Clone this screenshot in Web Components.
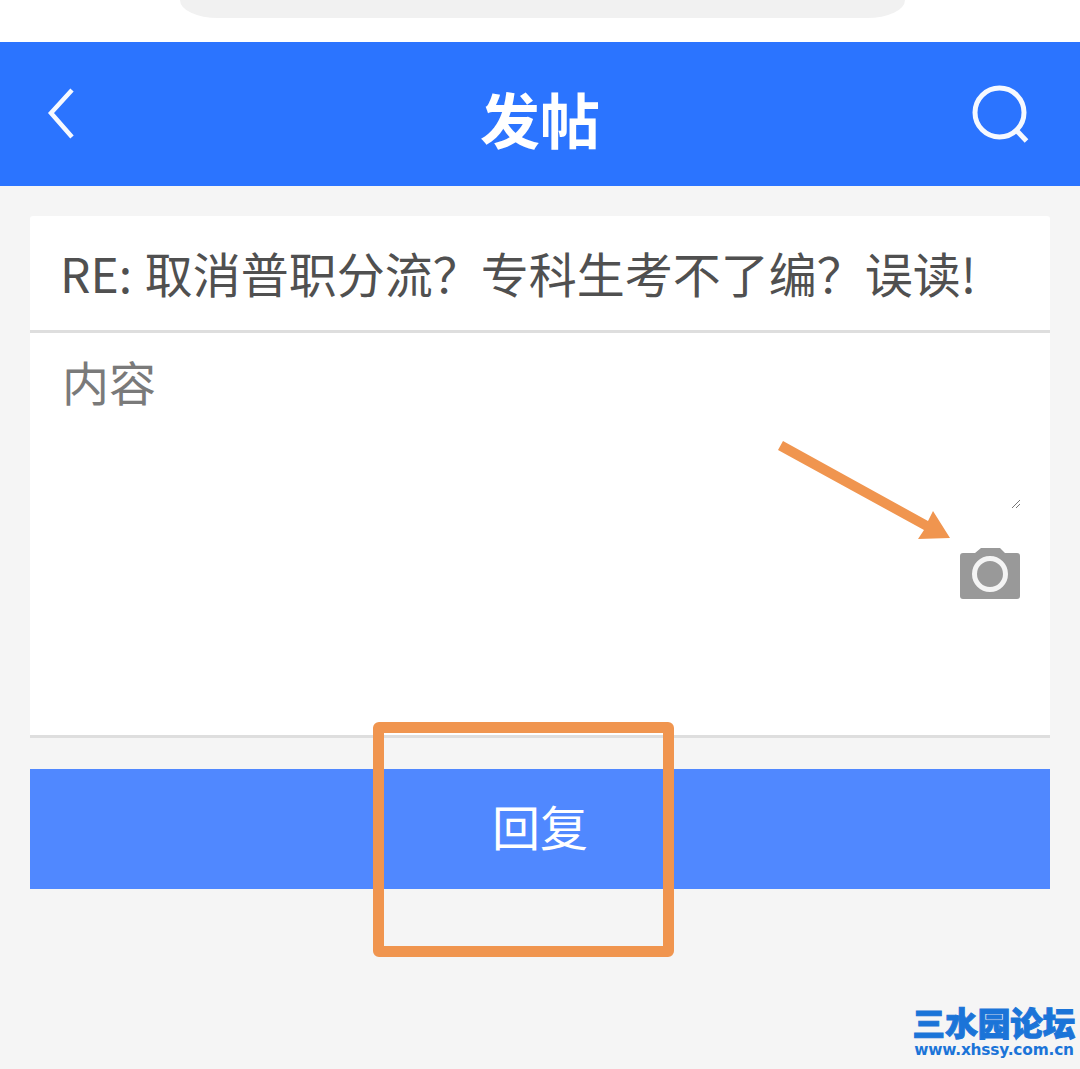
<!DOCTYPE html>
<html lang="zh-CN">
<head>
<meta charset="utf-8">
<title>发帖</title>
<style>
  html, body {
    margin: 0;
    background: #f5f5f5;
  }
  body {
    position: relative;
    width: 1080px;
    height: 1069px;
    overflow: hidden;
    font-family: "Noto Sans CJK SC", "Noto Sans", sans-serif;
  }
</style>
</head>
<body>
<top-strip></top-strip>
<app-header>发帖</app-header>
<post-form subject="RE: 取消普职分流&#xFF1F;专科生考不了编&#xFF1F;误读!" placeholder="内容"></post-form>
<submit-button>回复</submit-button>
<note-marks></note-marks>
<site-mark name="三水园论坛" url="www.xhssy.com.cn"></site-mark>

<script>
class TopStrip extends HTMLElement {
  constructor() {
    super()
    this.attachShadow({ mode: 'open' })
    this.shadowRoot.innerHTML = `
      <style>
        :host {
          display: block;
          height: 42px;
          padding-left: 180px;
          box-sizing: border-box;
          background: #fff;
        }
        .pill {
          width: 725px;
          height: 18px;
          background: #f1f1f1;
          border-radius: 0 0 38px 38px / 0 0 18px 18px;
        }
      </style>
      <div class="pill"></div>
    `
  }
}
customElements.define('top-strip', TopStrip)

class AppHeader extends HTMLElement {
  constructor() {
    super()
    this.attachShadow({ mode: 'open' })
    this.shadowRoot.innerHTML = `
      <style>
        :host {
          display: grid;
          grid-template-columns: 1fr auto 1fr;
          align-items: center;
          height: 144px;
          padding: 0 50px;
          background: #2b74ff;
          color: #fff;
        }
        h1 {
          margin: 0;
          padding-top: 8px;
          font: 700 60px/1 "Noto Sans CJK SC", sans-serif;
        }
        svg { display: block; fill: none; stroke: #f6f9ff; }
        .back { margin-left: -4px; }
        .search { justify-self: end; }
      </style>
      <svg class="back" width="30" height="52" viewBox="0 0 30 52" stroke-width="4.5">
        <path d="M26 2 L5 25 L26 49"/>
      </svg>
      <h1><slot></slot></h1>
      <svg class="search" width="60" height="60" viewBox="0 0 60 60" stroke-width="5">
        <circle cx="29.5" cy="28.5" r="24.5"/>
        <path d="M47 47 L56.5 57"/>
      </svg>
    `
  }
}
customElements.define('app-header', AppHeader)

class PostForm extends HTMLElement {
  constructor() {
    super()
    this.attachShadow({ mode: 'open' })
    this.shadowRoot.innerHTML = `
      <style>
        :host {
          display: block;
          margin: 30px 30px 0;
          background: #fff;
          border-radius: 3px 3px 0 0;
          font-family: "Noto Sans CJK SC", "Noto Sans", sans-serif;
        }
        .subject {
          height: 117px;
          box-sizing: border-box;
          padding-left: 30px;
          font-size: 48px;
          line-height: 112px;
          word-spacing: 2px;
          white-space: nowrap;
          color: #505050;
          border-bottom: 3px solid #dedede;
        }
        .body {
          display: flex;
          flex-direction: column;
          height: 405px;
          box-sizing: border-box;
          padding: 18px 30px 0 32px;
          border-bottom: 3px solid #dedede;
        }
        .placeholder {
          height: 149px;
          font-size: 47px;
          line-height: 60px;
          color: #7a7a7a;
        }
        .grip { display: block; align-self: flex-end; }
        .camera { display: block; align-self: flex-end; margin-top: 40px; }
      </style>
      <div class="subject"></div>
      <div class="body">
        <div class="placeholder"></div>
        <svg class="grip" width="8" height="8" viewBox="0 0 8 8" stroke="#777" stroke-width="1" fill="none">
          <path d="M0 8 L8 0 M4 8 L8 4"/>
        </svg>
        <svg class="camera" width="60" height="51" viewBox="0 0 60 51">
          <path fill="#999" d="M21 0 H40 L45 5 H57 Q60 5 60 8 V48 Q60 51 57 51 H3 Q0 51 0 48 V8 Q0 5 3 5 H15 Z"/>
          <circle cx="30" cy="26" r="15.5" fill="none" stroke="#f4f4f4" stroke-width="5"/>
        </svg>
      </div>
    `
    this.shadowRoot.querySelector('.subject').textContent = this.getAttribute('subject')
    this.shadowRoot.querySelector('.placeholder').textContent = this.getAttribute('placeholder')
  }
}
customElements.define('post-form', PostForm)

class SubmitButton extends HTMLElement {
  constructor() {
    super()
    this.attachShadow({ mode: 'open' })
    this.shadowRoot.innerHTML = `
      <style>
        :host {
          display: flex;
          align-items: center;
          justify-content: center;
          height: 120px;
          box-sizing: border-box;
          padding-bottom: 8px;
          margin: 31px 30px 0;
          background: #5088ff;
          color: #fff;
          font: 48px/1 "Noto Sans CJK SC", sans-serif;
        }
      </style>
      <slot></slot>
    `
  }
}
customElements.define('submit-button', SubmitButton)

// orange annotations drawn over the screenshot
class NoteMarks extends HTMLElement {
  constructor() {
    super()
    this.attachShadow({ mode: 'open' })
    this.shadowRoot.innerHTML = `
      <style>
        :host {
          position: absolute;
          inset: 0;
          pointer-events: none;
        }
        .arrow { position: absolute; left: 0; top: 0; }
        .box {
          position: absolute;
          left: 373px;
          top: 722px;
          width: 301px;
          height: 235px;
          box-sizing: border-box;
          border: 11px solid #f0954f;
          border-radius: 6px;
        }
      </style>
      <svg class="arrow" width="1080" height="1069" viewBox="0 0 1080 1069">
        <path fill="#f0954f" d="M783 441 L778 450 L924 530 L918 539 L950 538 L933 511 L928 521 Z"/>
      </svg>
      <div class="box"></div>
    `
  }
}
customElements.define('note-marks', NoteMarks)

class SiteMark extends HTMLElement {
  constructor() {
    super()
    this.attachShadow({ mode: 'open' })
    this.shadowRoot.innerHTML = `
      <style>
        :host {
          position: absolute;
          left: 912px;
          top: 1004px;
          width: 164px;
          color: #1b74d8;
          text-align: center;
        }
        .name {
          font: 900 32.6px/36px "Noto Sans CJK SC", sans-serif;
          white-space: nowrap;
          -webkit-text-stroke: 1px #1b74d8;
        }
        .url {
          margin-top: 2px;
          font: 700 15.4px/16px "DejaVu Sans", sans-serif;
          white-space: nowrap;
          letter-spacing: -0.2px;
        }
      </style>
      <div class="name"></div>
      <div class="url"></div>
    `
    this.shadowRoot.querySelector('.name').textContent = this.getAttribute('name')
    this.shadowRoot.querySelector('.url').textContent = this.getAttribute('url')
  }
}
customElements.define('site-mark', SiteMark)
</script>
</body>
</html>
